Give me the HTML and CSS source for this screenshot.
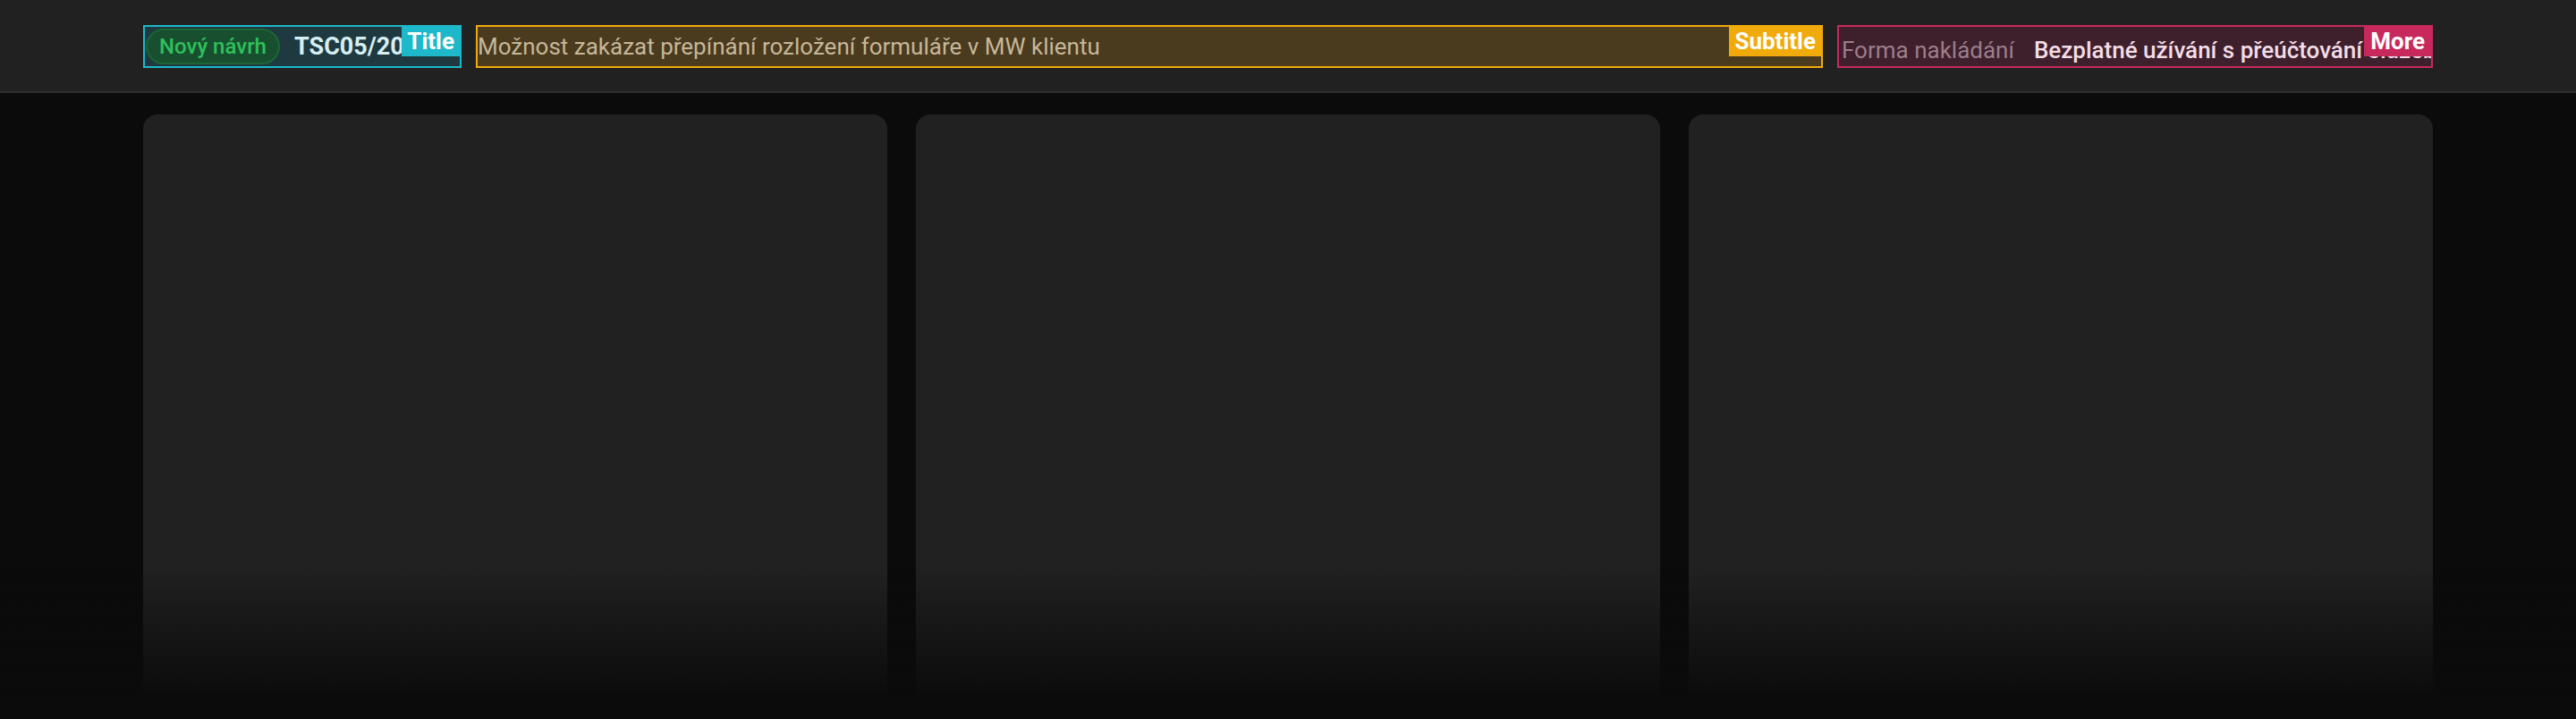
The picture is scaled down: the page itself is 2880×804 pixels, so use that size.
FILE: index.html
```html
<!DOCTYPE html>
<html lang="cs">
<head>
<meta charset="utf-8">
<title>Návrh</title>
<link rel="stylesheet" href="styles.css">
</head>
<body>
<header class="topbar">
  <div class="topbar-inner">
    <div class="region region-title">
      <span class="pill">Nový návrh</span>
      <span class="code">TSC05/2024/0117</span>
      <span class="tag tag-title">Title</span>
    </div>
    <div class="region region-subtitle">
      <span class="subtitle-text">Možnost zakázat přepínání rozložení formuláře v MW klientu</span>
      <span class="tag tag-subtitle">Subtitle</span>
    </div>
    <div class="region region-more">
      <span class="more-label">Forma nakládání</span>
      <span class="more-value">Bezplatné užívání s přeúčtování služeb</span>
      <span class="tag tag-more">More</span>
    </div>
  </div>
</header>
<main class="content">
  <section class="card"></section>
  <section class="card"></section>
  <section class="card"></section>
</main>
<div class="fade"></div>
</body>
</html>
```
FILE: styles.css
```css
* { box-sizing: border-box; }
html, body {
  margin: 0;
  padding: 0;
  height: 100%;
  overflow: hidden;
  background: #0b0b0b;
  font-family: Roboto, "Noto Sans", "Liberation Sans", sans-serif;
}
.topbar {
  height: 104px;
  background: #212121;
  border-bottom: 2px solid #2e2e2e;
}
.topbar-inner {
  width: 2560px;
  margin: 0 auto;
  height: 102px;
  display: flex;
  align-items: center;
  gap: 16px;
  padding-top: 2px;
}
.region {
  position: relative;
  flex: none;
  height: 48px;
  border: 2px solid;
  display: flex;
  align-items: center;
  overflow: hidden;
  white-space: nowrap;
}
.region-title {
  width: 356px;
  background: #1e393f;
  border-color: #1db8c9;
  padding-left: 1px;
}
.pill {
  height: 40px;
  width: 150px;
  flex: none;
  border-radius: 20px;
  background: #18502f;
  border: 2px solid #1d6537;
  color: #2ec15a;
  font-size: 24px;
  font-weight: 500;
  display: flex;
  align-items: center;
  justify-content: center;
}
.code {
  margin-left: 16px;
  color: #d6eef2;
  font-size: 27px;
  font-weight: 700;
}
.region-subtitle {
  width: 1506px;
  background: #4a3a1e;
  border-color: #f0aa0a;
}
.subtitle-text {
  color: #c6b799;
  font-size: 26px;
}
.region-more {
  width: 666px;
  background: #3e1f2c;
  border-color: #c8295c;
  padding-top: 7px;
}
.more-label {
  color: #9c7d8b;
  font-size: 26px;
  padding-left: 3px;
}
.more-value {
  margin-left: 22px;
  color: #f3dde6;
  font-size: 26px;
  font-weight: 500;
}
.tag {
  position: absolute;
  top: 0;
  right: 0;
  height: 33px;
  padding: 0 6px;
  color: #ffffff;
  font-size: 26px;
  font-weight: 700;
  line-height: 33px;
}
.tag-title { background: #1db8c9; }
.tag-subtitle { background: #f0aa0a; }
.tag-more { background: #c8295c; padding: 0 7px; }
.content {
  width: 2560px;
  margin: 24px auto 0;
  display: grid;
  grid-template-columns: repeat(3, 1fr);
  gap: 32px;
}
.card {
  height: 760px;
  background: #212121;
  border-radius: 16px;
}
.fade {
  position: fixed;
  left: 0;
  right: 0;
  bottom: 0;
  height: 170px;
  background: linear-gradient(to bottom, rgba(11,11,11,0) 0%, rgba(11,11,11,1) 88%);
  pointer-events: none;
}
```
